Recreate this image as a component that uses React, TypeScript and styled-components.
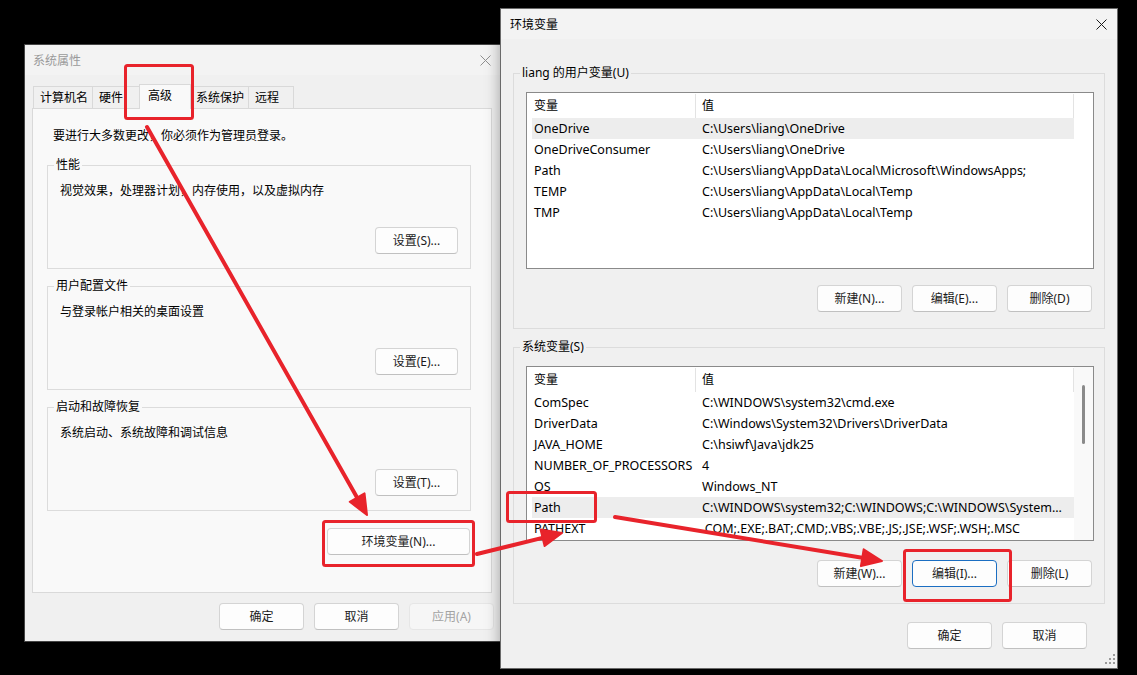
import React from "react";
import styled, { createGlobalStyle } from "styled-components";

const FONT = `"Noto Sans", "Noto Sans CJK SC", sans-serif`;
const RED = "#e8232b";

const GlobalStyle = createGlobalStyle`
  html, body { margin: 0; padding: 0; background: #000; }
  body { font-family: ${FONT}; font-size: 12px; color: #000; }
`;

const Desktop = styled.div`
  position: relative;
  width: 1137px;
  height: 675px;
  overflow: hidden;
  background: #000;
`;

/* ---------- window chrome ---------- */

const Window = styled.div<{ $left: number; $top: number; $width: number; $height: number; $active?: boolean }>`
  position: absolute;
  left: ${(p) => p.$left}px;
  top: ${(p) => p.$top}px;
  width: ${(p) => p.$width}px;
  height: ${(p) => p.$height}px;
  box-sizing: border-box;
  border: 1px solid ${(p) => (p.$active ? "#6a6a6a" : "#454545")};
  background: #f0f0f0;
  display: flex;
  flex-direction: column;
  box-shadow: ${(p) => (p.$active ? "0 0 14px rgba(0,0,0,0.35)" : "none")};
  z-index: ${(p) => (p.$active ? 2 : 1)};
  font-family: ${FONT};
  font-size: 12px;
`;

const TitleBar = styled.div<{ $active?: boolean; $padLeft: number }>`
  height: 30px;
  flex: none;
  display: flex;
  align-items: center;
  justify-content: space-between;
  padding: 0 10px 0 ${(p) => p.$padLeft}px;
  background: #f3f3f3;
  color: ${(p) => (p.$active ? "#000" : "#9a9a9a")};
`;

const CloseGlyph = ({ color }: { color: string }) => (
  <svg width="11" height="11" viewBox="0 0 11 11">
    <path d="M0.5 0.5 L10.5 10.5 M10.5 0.5 L0.5 10.5" stroke={color} strokeWidth="1" fill="none" />
  </svg>
);

/* ---------- tabs ---------- */

const TabStrip = styled.div`
  display: flex;
  align-items: flex-end;
  height: 24px;
  margin-top: 9px;
  padding-left: 8px;
  flex: none;
  position: relative;
  z-index: 1;
`;

const Tab = styled.div<{ $width: number; $active?: boolean; $last?: boolean }>`
  flex: none;
  box-sizing: border-box;
  width: ${(p) => (p.$active ? p.$width + 4 : p.$width)}px;
  height: ${(p) => (p.$active ? 25 : 22)}px;
  margin: ${(p) => (p.$active ? "0 -2px -1px" : "0")};
  padding-left: ${(p) => (p.$active ? 8 : 6)}px;
  line-height: ${(p) => (p.$active ? 22 : 21)}px;
  border-top: 1px solid #d9d9d9;
  border-left: 1px solid #d9d9d9;
  border-right: ${(p) => (p.$active || p.$last ? "1px solid #d9d9d9" : "none")};
  background: ${(p) => (p.$active ? "#f9f9f9" : "#f0f0f0")};
  position: relative;
  z-index: ${(p) => (p.$active ? 2 : 1)};
  white-space: nowrap;
`;

const TabPage = styled.div`
  margin: 0 9px 0 7px;
  height: 485px;
  flex: none;
  box-sizing: border-box;
  border: 1px solid #d9d9d9;
  background: #f9f9f9;
  padding: 19px 20px 0 14px;
  display: flex;
  flex-direction: column;
`;

const Intro = styled.div`
  margin-left: 6px;
  line-height: 16px;
  white-space: nowrap;
`;

/* ---------- group boxes ---------- */

const GroupBox = styled.div<{ $height: number; $gap: number; $pad: string }>`
  flex: none;
  height: ${(p) => p.$height}px;
  margin-top: ${(p) => p.$gap}px;
  box-sizing: border-box;
  border: 1px solid #dcdcdc;
  padding: ${(p) => p.$pad};
  display: flex;
  flex-direction: column;
`;

const GroupLegend = styled.span<{ $bg: string }>`
  align-self: flex-start;
  margin: -9px 0 0 -6px;
  padding: 0 2px;
  height: 16px;
  line-height: 16px;
  background: ${(p) => p.$bg};
  white-space: nowrap;
`;

const GroupText = styled.div`
  margin-top: 10px;
  line-height: 16px;
  white-space: nowrap;
`;

/* ---------- buttons ---------- */

const PushButton = styled.button<{ $width: number; $focused?: boolean }>`
  flex: none;
  width: ${(p) => p.$width}px;
  height: 27px;
  box-sizing: border-box;
  padding: 0;
  border: 1px solid ${(p) => (p.$focused ? "#1b6ec2" : "#d4d4d4")};
  border-bottom-color: ${(p) => (p.$focused ? "#1b6ec2" : "#c0c0c0")};
  border-radius: 4px;
  background: #fdfdfd;
  color: #1b1b1b;
  font-family: ${FONT};
  font-size: 12px;
  line-height: 25px;
  text-align: center;
  white-space: nowrap;

  &:disabled {
    background: #f6f6f6;
    border-color: #e6e6e6;
    color: #a3a3a3;
  }
`;

const GroupButton = styled(PushButton)`
  margin-top: auto;
  margin-bottom: 14px;
  align-self: flex-end;
`;

const EnvButton = styled(PushButton)`
  margin-top: 17px;
  margin-right: 1px;
  align-self: flex-end;
`;

const ButtonRow = styled.div<{ $top: number; $right: number }>`
  flex: none;
  display: flex;
  justify-content: flex-end;
  gap: 10px;
  margin-top: ${(p) => p.$top}px;
  margin-right: ${(p) => p.$right}px;
`;

const ListButtons = styled(ButtonRow)`
  margin-top: auto;
`;

/* ---------- list view ---------- */

const ListView = styled.div<{ $height: number }>`
  flex: none;
  height: ${(p) => p.$height}px;
  margin-top: 11px;
  box-sizing: border-box;
  border: 1px solid #8a8a8a;
  background: #fff;
  display: flex;
  overflow: hidden;
`;

const ListColumns = styled.div`
  flex: 1;
  min-width: 0;
  display: flex;
  flex-direction: column;
`;

const HeaderRow = styled.div`
  flex: none;
  height: 25px;
  display: grid;
  grid-template-columns: 169px 1fr;
`;

const HeaderCell = styled.div<{ $pad: number }>`
  padding-left: ${(p) => p.$pad}px;
  margin-top: 1px;
  line-height: 23px;
  border-right: 1px solid #e3e3e3;
  white-space: nowrap;
  overflow: hidden;
`;

const DataRow = styled.div<{ $selected?: boolean }>`
  flex: none;
  height: 21px;
  margin-left: 5px;
  display: grid;
  grid-template-columns: 164px 1fr;
  background: ${(p) => (p.$selected ? "#ededed" : "transparent")};
`;

const Cell = styled.div<{ $pad: number }>`
  padding-left: ${(p) => p.$pad}px;
  font-size: 12.5px;
  line-height: 21px;
  white-space: nowrap;
  overflow: hidden;
`;

const ScrollColumn = styled.div<{ $visible?: boolean }>`
  flex: none;
  width: 19px;
  background: ${(p) => (p.$visible ? "#f9f9f9" : "#fff")};
`;

const ScrollThumb = styled.div`
  width: 3px;
  height: 59px;
  margin: 18px 0 0 8px;
  border-radius: 2px;
  background: #8a8a8a;
`;

/* ---------- right window body ---------- */

const EnvBody = styled.div`
  flex: 1;
  display: flex;
  flex-direction: column;
  padding: 0 12px;
`;

const SizeGrip = styled.svg`
  flex: none;
  align-self: flex-end;
  margin: 0 1px 3px 0;
`;

/* ---------- annotation layer ---------- */

const Annotations = styled.svg`
  position: absolute;
  left: 0;
  top: 0;
  width: 1137px;
  height: 675px;
  pointer-events: none;
  z-index: 10;
`;

type Point = [number, number];

function Arrow({ from, to }: { from: Point; to: Point }) {
  const [sx, sy] = from;
  const [tx, ty] = to;
  const len = Math.hypot(tx - sx, ty - sy);
  const dx = (tx - sx) / len;
  const dy = (ty - sy) / len;
  const headLen = 20;
  const half = 8.5;
  const bx = tx - dx * headLen;
  const by = ty - dy * headLen;
  const px = -dy;
  const py = dx;
  const pts = `${tx},${ty} ${bx + px * half},${by + py * half} ${bx - px * half},${by - py * half}`;
  return (
    <g>
      <line x1={sx} y1={sy} x2={bx + dx * 3} y2={by + dy * 3} stroke={RED} strokeWidth={4} strokeLinecap="round" />
      <polygon points={pts} fill={RED} stroke={RED} strokeWidth={2} strokeLinejoin="round" />
    </g>
  );
}

function Mark({ x, y, w, h }: { x: number; y: number; w: number; h: number }) {
  return <rect x={x} y={y} width={w} height={h} rx={2} fill="none" stroke={RED} strokeWidth={3} />;
}

/* ---------- data ---------- */

type VarRow = { name: string; value: string; selected?: boolean };

const userVars: VarRow[] = [
  { name: "OneDrive", value: "C:\\Users\\liang\\OneDrive", selected: true },
  { name: "OneDriveConsumer", value: "C:\\Users\\liang\\OneDrive" },
  { name: "Path", value: "C:\\Users\\liang\\AppData\\Local\\Microsoft\\WindowsApps;" },
  { name: "TEMP", value: "C:\\Users\\liang\\AppData\\Local\\Temp" },
  { name: "TMP", value: "C:\\Users\\liang\\AppData\\Local\\Temp" },
];

const systemVars: VarRow[] = [
  { name: "ComSpec", value: "C:\\WINDOWS\\system32\\cmd.exe" },
  { name: "DriverData", value: "C:\\Windows\\System32\\Drivers\\DriverData" },
  { name: "JAVA_HOME", value: "C:\\hsiwf\\Java\\jdk25" },
  { name: "NUMBER_OF_PROCESSORS", value: "4" },
  { name: "OS", value: "Windows_NT" },
  { name: "Path", value: "C:\\WINDOWS\\system32;C:\\WINDOWS;C:\\WINDOWS\\System...", selected: true },
  { name: "PATHEXT", value: ".COM;.EXE;.BAT;.CMD;.VBS;.VBE;.JS;.JSE;.WSF;.WSH;.MSC" },
];

function VarList({ rows, height, scroll }: { rows: VarRow[]; height: number; scroll?: boolean }) {
  return (
    <ListView $height={height}>
      <ListColumns>
        <HeaderRow>
          <HeaderCell $pad={7}>变量</HeaderCell>
          <HeaderCell $pad={6}>值</HeaderCell>
        </HeaderRow>
        {rows.map((r) => (
          <DataRow key={r.name} $selected={r.selected}>
            <Cell $pad={2}>{r.name}</Cell>
            <Cell $pad={6}>{r.value}</Cell>
          </DataRow>
        ))}
      </ListColumns>
      <ScrollColumn $visible={scroll}>{scroll && <ScrollThumb />}</ScrollColumn>
    </ListView>
  );
}

const tabs = [
  { label: "计算机名", width: 59 },
  { label: "硬件", width: 49 },
  { label: "高级", width: 48, active: true },
  { label: "系统保护", width: 59 },
  { label: "远程", width: 46 },
];

const groups = [
  { title: "性能", text: "视觉效果，处理器计划，内存使用，以及虚拟内存", button: "设置(S)..." },
  { title: "用户配置文件", text: "与登录帐户相关的桌面设置", button: "设置(E)..." },
  { title: "启动和故障恢复", text: "系统启动、系统故障和调试信息", button: "设置(T)..." },
];

export default function App() {
  return (
    <Desktop>
      <GlobalStyle />

      {/* 系统属性 */}
      <Window $left={24} $top={44} $width={478} $height={598}>
        <TitleBar $padLeft={8}>
          <span>系统属性</span>
          <CloseGlyph color="#8f8f8f" />
        </TitleBar>
        <TabStrip>
          {tabs.map((t, i) => (
            <Tab key={t.label} $width={t.width} $active={t.active} $last={i === tabs.length - 1}>
              {t.label}
            </Tab>
          ))}
        </TabStrip>
        <TabPage>
          <Intro>要进行大多数更改，你必须作为管理员登录。</Intro>
          {groups.map((g, i) => (
            <GroupBox key={g.title} $height={104} $gap={i === 0 ? 21 : 17} $pad="0 12px">
              <GroupLegend $bg="#f9f9f9">{g.title}</GroupLegend>
              <GroupText>{g.text}</GroupText>
              <GroupButton $width={83}>{g.button}</GroupButton>
            </GroupBox>
          ))}
          <EnvButton $width={143}>环境变量(N)...</EnvButton>
        </TabPage>
        <ButtonRow $top={10} $right={7}>
          <PushButton $width={85}>确定</PushButton>
          <PushButton $width={85}>取消</PushButton>
          <PushButton $width={85} disabled>
            应用(A)
          </PushButton>
        </ButtonRow>
      </Window>

      {/* 环境变量 */}
      <Window $left={500} $top={8} $width={618} $height={661} $active>
        <TitleBar $padLeft={9} $active>
          <span>环境变量</span>
          <CloseGlyph color="#1a1a1a" />
        </TitleBar>
        <EnvBody>
          <GroupBox $height={256} $gap={34} $pad="0 10px 16px 12px">
            <GroupLegend $bg="#f0f0f0">liang 的用户变量(U)</GroupLegend>
            <VarList rows={userVars} height={177} />
            <ListButtons $top={0} $right={2}>
              <PushButton $width={85}>新建(N)...</PushButton>
              <PushButton $width={85}>编辑(E)...</PushButton>
              <PushButton $width={85}>删除(D)</PushButton>
            </ListButtons>
          </GroupBox>
          <GroupBox $height={257} $gap={18} $pad="0 10px 16px 12px">
            <GroupLegend $bg="#f0f0f0">系统变量(S)</GroupLegend>
            <VarList rows={systemVars} height={175} scroll />
            <ListButtons $top={0} $right={2}>
              <PushButton $width={85}>新建(W)...</PushButton>
              <PushButton $width={85} $focused>
                编辑(I)...
              </PushButton>
              <PushButton $width={85}>删除(L)</PushButton>
            </ListButtons>
          </GroupBox>
          <ButtonRow $top={18} $right={18}>
            <PushButton $width={85}>确定</PushButton>
            <PushButton $width={85}>取消</PushButton>
          </ButtonRow>
        </EnvBody>
        <SizeGrip width="12" height="12" viewBox="0 0 12 12">
          {[
            [9, 1],
            [5, 5],
            [9, 5],
            [1, 9],
            [5, 9],
            [9, 9],
          ].map(([x, y]) => (
            <rect key={`${x}-${y}`} x={x} y={y} width="2" height="2" fill="#9a9a9a" />
          ))}
        </SizeGrip>
      </Window>

      <Annotations viewBox="0 0 1137 675">
        <Mark x={125.5} y={65.5} w={67} h={53} />
        <Mark x={323.5} y={521.5} w={150} h={44} />
        <Mark x={507.5} y={492.5} w={88} h={29} />
        <Mark x={904.5} y={550.5} w={106} h={50} />
        <Arrow from={[147, 127]} to={[367, 515]} />
        <Arrow from={[477, 554]} to={[562, 533]} />
        <Arrow from={[615, 517]} to={[882, 561]} />
      </Annotations>
    </Desktop>
  );
}
